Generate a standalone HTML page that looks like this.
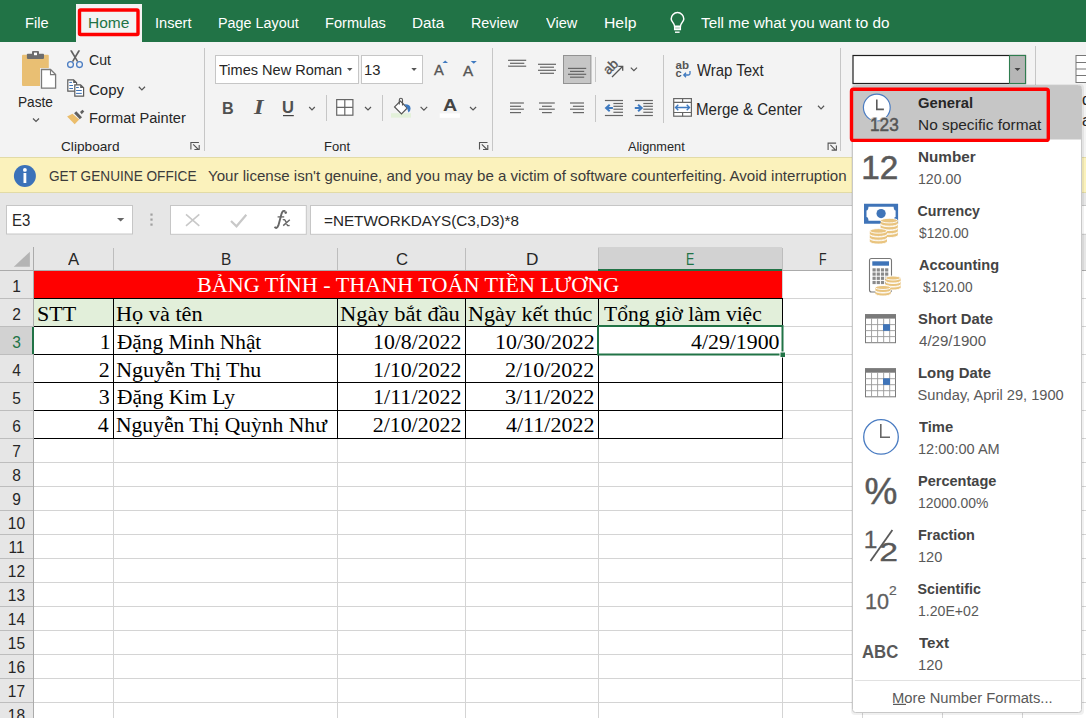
<!DOCTYPE html>
<html><head><meta charset="utf-8"><title>Excel</title>
<style>
html,body{margin:0;padding:0;}
body{width:1086px;height:718px;overflow:hidden;position:relative;background:#fff;font-family:'Liberation Sans',sans-serif;}
.t{position:absolute;white-space:pre;transform-origin:0 0;}
svg.l{position:absolute;left:0;top:0;}
</style></head><body>
<svg class="l" width="1086" height="718" style="z-index:1"><rect x="0" y="0" width="1086" height="42" fill="#217346" /><rect x="0" y="42" width="1086" height="115" fill="#f3f3f3" /><rect x="76" y="4" width="66" height="38" fill="#f3f3f3" /><rect x="0" y="157" width="1086" height="36" fill="#fbf2bc" /><line x1="0" y1="157.5" x2="1086" y2="157.5" stroke="#e2dba6" stroke-width="1" /><line x1="0" y1="192.5" x2="1086" y2="192.5" stroke="#e2dba6" stroke-width="1" /><rect x="0" y="193" width="1086" height="54" fill="#e6e6e6" /><line x1="204.5" y1="48" x2="204.5" y2="151" stroke="#c6c6c6" stroke-width="1" /><line x1="492.5" y1="48" x2="492.5" y2="151" stroke="#c6c6c6" stroke-width="1" /><line x1="840.5" y1="48" x2="840.5" y2="151" stroke="#c6c6c6" stroke-width="1" /><line x1="1035.5" y1="46" x2="1035.5" y2="151" stroke="#c6c6c6" stroke-width="1" /><line x1="326.5" y1="95" x2="326.5" y2="121" stroke="#c6c6c6" stroke-width="1" /><line x1="382.5" y1="95" x2="382.5" y2="121" stroke="#c6c6c6" stroke-width="1" /><line x1="595.5" y1="57" x2="595.5" y2="82" stroke="#c6c6c6" stroke-width="1" /><line x1="595.5" y1="95" x2="595.5" y2="122" stroke="#c6c6c6" stroke-width="1" /><line x1="663.5" y1="55" x2="663.5" y2="123" stroke="#c6c6c6" stroke-width="1" /><rect x="79.5" y="10" width="58.5" height="24.5" rx="1" fill="none" stroke="#ff0000" stroke-width="3.4"/><rect x="22" y="54.7" width="26.8" height="31.3" rx="1" fill="#e9bf73"/><rect x="40" y="68" width="17.2" height="21.6" fill="#f3f3f3"/><path d="M41.5 69.5 H50.5 L55.6 74.6 V88.1 H41.5 Z" fill="#fff" stroke="#7a7a7a" stroke-width="1.3"/><path d="M50.5 69.5 V74.6 H55.6" fill="none" stroke="#7a7a7a" stroke-width="1.1"/><rect x="26.9" y="53.8" width="17.1" height="5.1" rx="0.8" fill="#6d6d6d"/><rect x="32" y="51" width="7" height="4" rx="1" fill="#6d6d6d"/><rect x="34" y="52.6" width="3" height="2.6" fill="#ffffff"/><polyline points="33,118.5 36.0,121.5 39,118.5" fill="none" stroke="#555" stroke-width="1.2"/><polyline points="138.8,86.75 141.9,89.85 145,86.75" fill="none" stroke="#555" stroke-width="1.2"/><polyline points="309.2,107.0 312.0,109.80000000000001 314.8,107.0" fill="none" stroke="#555" stroke-width="1.2"/><polyline points="365,107.0 368.0,110.0 371,107.0" fill="none" stroke="#555" stroke-width="1.2"/><polyline points="420.6,106.85000000000001 423.9,110.14999999999999 427.2,106.85000000000001" fill="none" stroke="#555" stroke-width="1.2"/><polyline points="470,106.975 473.05,110.025 476.1,106.975" fill="none" stroke="#555" stroke-width="1.2"/><polyline points="630.8,67.64999999999999 633.9,70.75000000000001 637,67.64999999999999" fill="none" stroke="#555" stroke-width="1.2"/><polyline points="818,105.77499999999999 821.05,108.825 824.1,105.77499999999999" fill="none" stroke="#555" stroke-width="1.2"/><path d="M70 50.5 L71.9 50.3 L78.3 61.3 L77 61.9 Z" fill="#606060"/><path d="M80.2 50.5 L78.3 50.3 L71.9 61.3 L73.2 61.9 Z" fill="#606060"/><circle cx="70.5" cy="64.6" r="2.9" fill="none" stroke="#4a7cc2" stroke-width="1.3"/><circle cx="79.5" cy="64.6" r="2.9" fill="none" stroke="#4a7cc2" stroke-width="1.3"/><path d="M67.8 79.8 H73.6 L76.6 82.8 V91.1 H67.8 Z" fill="#fff" stroke="#5a5a5a" stroke-width="1.2"/><path d="M73.2 79.8 V83 H76.6 Z" fill="#5a5a5a"/><path d="M69.3 82.4 H72 M69.3 85.5 H73 M69.3 88.5 H73" stroke="#3f74b8" stroke-width="1"/><path d="M74.8 84.8 H80.6 L83.6 87.8 V96.1 H74.8 Z" fill="#fff" stroke="#5a5a5a" stroke-width="1.2"/><path d="M80.2 84.8 V88 H83.6 Z" fill="#5a5a5a"/><path d="M76.1 87.5 H78.8 M76.1 90.5 H81.8 M76.1 93.4 H81.8" stroke="#3f74b8" stroke-width="1"/><path d="M80 112.1 L82.4 109.7 L84.3 111.6 L81.7 114.2 Z" fill="#606060"/><path d="M74.1 113.2 L76.3 111.3 L82 117.2 L79.8 119.2 Z" fill="#606060"/><path d="M67.1 116.4 L72.5 113.8 L79.2 119.6 L74.7 124.3 Z" fill="#ebbd6b"/><path d="M190.9 149.5 V142.5 H198.9" fill="none" stroke="#555" stroke-width="1.1"/><path d="M193.20000000000002 144.3 L198.4 149.5 M194.4 149.5 H199.20000000000002 V145" fill="none" stroke="#555" stroke-width="1.1"/><path d="M479.5 149.5 V142.5 H487.5" fill="none" stroke="#555" stroke-width="1.1"/><path d="M481.8 144.3 L487 149.5 M483 149.5 H487.8 V145" fill="none" stroke="#555" stroke-width="1.1"/><path d="M828.1 150.1 V143.1 H836.1" fill="none" stroke="#555" stroke-width="1.1"/><path d="M830.4 144.9 L835.6 150.1 M831.6 150.1 H836.4 V145.6" fill="none" stroke="#555" stroke-width="1.1"/><rect x="215.5" y="55.5" width="143" height="28" fill="#fff" stroke="#c6c6c6"/><rect x="361.5" y="55.5" width="61" height="28" fill="#fff" stroke="#c6c6c6"/><path d="M347 68 H352.5 L349.75 71 Z" fill="#555"/><path d="M411.3 68 H416.8 L414.05 71 Z" fill="#555"/><path d="M442.5 63 L445.2 60.5 L448 63 Z" fill="#3f7ac0"/><path d="M470.7 61 L476.8 61 L473.75 63.8 Z" fill="#3f7ac0"/><rect x="283" y="115" width="10.8" height="1.2" fill="#444" /><rect x="336.7" y="99.6" width="16.2" height="15.6" fill="#fff" stroke="#666" stroke-width="1.2"/><path d="M344.8 99.6 V115.2 M336.7 107.4 H352.9" stroke="#666" stroke-width="1.2"/><rect x="391" y="113.2" width="20" height="4.4" fill="#e3f1da" /><g transform="translate(0.8,1.4)"><path d="M393.8 105.5 L399.6 99.7 L406.5 106.6 L400.7 112.4 Z" fill="#fff" stroke="#555" stroke-width="1.2"/><path d="M398.5 103 V98.5 A1.6 1.6 0 0 1 401.7 98.5 V104" fill="none" stroke="#555" stroke-width="1.1"/><path d="M403.5 102.8 Q409.5 102.5 409.8 107 Q409.6 110.5 407.6 111.2 L406.3 106.6 Z" fill="#3f7ac0"/></g><rect x="439.7" y="113.4" width="20.2" height="4.4" fill="#ffffff" /><path d="M508.1 60.3 H526.2" stroke="#666" stroke-width="1.2"/><path d="M510 63.3 H524.3" stroke="#666" stroke-width="1.2"/><path d="M508.1 66.2 H526.2" stroke="#666" stroke-width="1.2"/><path d="M538 64.3 H556" stroke="#666" stroke-width="1.2"/><path d="M540 67.2 H554" stroke="#666" stroke-width="1.2"/><path d="M538 70.3 H556" stroke="#666" stroke-width="1.2"/><path d="M540 73.3 H554" stroke="#666" stroke-width="1.2"/><rect x="563.5" y="55.5" width="27.4" height="28" fill="#c6c6c6" stroke="#929292"/><path d="M568 68.4 H586.2" stroke="#666" stroke-width="1.2"/><path d="M570 71.4 H584.2" stroke="#666" stroke-width="1.2"/><path d="M568 74.3 H586.2" stroke="#666" stroke-width="1.2"/><path d="M570 77.2 H584.2" stroke="#666" stroke-width="1.2"/><path d="M510 103 H523.9" stroke="#666" stroke-width="1.2"/><path d="M510 106.3 H521" stroke="#666" stroke-width="1.2"/><path d="M510 109.2 H523.9" stroke="#666" stroke-width="1.2"/><path d="M510 112.6 H521" stroke="#666" stroke-width="1.2"/><path d="M539 103 H554.8" stroke="#666" stroke-width="1.2"/><path d="M542 106.3 H551.8" stroke="#666" stroke-width="1.2"/><path d="M539 109.2 H554.8" stroke="#666" stroke-width="1.2"/><path d="M542 112.6 H551.8" stroke="#666" stroke-width="1.2"/><path d="M570 103 H584" stroke="#666" stroke-width="1.2"/><path d="M572.9 106.3 H584" stroke="#666" stroke-width="1.2"/><path d="M570 109.2 H584" stroke="#666" stroke-width="1.2"/><path d="M572.9 112.6 H584" stroke="#666" stroke-width="1.2"/><text x="0" y="0" transform="translate(608.4,75.2) rotate(-45)" font-family="Liberation Sans" font-size="13.5" fill="#555" stroke="#555" stroke-width="0.35">ab</text><path d="M612 77 L622.5 66.5 M618.3 66.3 H622.7 V70.7" fill="none" stroke="#555" stroke-width="1.3"/><path d="M604.9 100.5 H623.0" stroke="#666" stroke-width="1.2"/><path d="M604.9 115.5 H623.0" stroke="#666" stroke-width="1.2"/><path d="M613.4 103.5 H623.0" stroke="#666" stroke-width="1.2"/><path d="M613.4 106.3 H623.0" stroke="#666" stroke-width="1.2"/><path d="M613.4 109.2 H623.0" stroke="#666" stroke-width="1.2"/><path d="M613.4 112.3 H623.0" stroke="#666" stroke-width="1.2"/><path d="M612.9 108 H606.6999999999999 M609.6999999999999 104.8 L606.1 108 L609.6999999999999 111.3" fill="none" stroke="#3f7ac0" stroke-width="2"/><path d="M634.8 100.5 H652.9" stroke="#666" stroke-width="1.2"/><path d="M634.8 115.5 H652.9" stroke="#666" stroke-width="1.2"/><path d="M643.3 103.5 H652.9" stroke="#666" stroke-width="1.2"/><path d="M643.3 106.3 H652.9" stroke="#666" stroke-width="1.2"/><path d="M643.3 109.2 H652.9" stroke="#666" stroke-width="1.2"/><path d="M643.3 112.3 H652.9" stroke="#666" stroke-width="1.2"/><path d="M634.8 108 H641.0999999999999 M638.0999999999999 104.8 L641.6999999999999 108 L638.0999999999999 111.3" fill="none" stroke="#3f7ac0" stroke-width="2"/><text x="675.5" y="68.5" font-family="Liberation Sans" font-size="11" font-weight="700" fill="#555" textLength="13.5" lengthAdjust="spacingAndGlyphs">ab</text><text x="675.5" y="76.8" font-family="Liberation Sans" font-size="11" font-weight="700" fill="#555">c</text><path d="M690 71 V73.5 Q690 75 688.5 75 H684 M686 72.8 L683.8 75 L686 77.2" fill="none" stroke="#3f7ac0" stroke-width="1.3"/><rect x="673.7" y="98.6" width="17.7" height="17.6" fill="#fff" stroke="#666" stroke-width="1.2"/><path d="M673.7 102.3 H691.4 M673.7 112.5 H691.4 M682.6 98.6 V102.3 M682.6 112.5 V116.2" stroke="#666" stroke-width="1.2"/><path d="M675.5 107.5 H689.5 M678.3 104.8 L675.5 107.5 L678.3 110.2 M686.7 104.8 L689.5 107.5 L686.7 110.2" fill="none" stroke="#3f7ac0" stroke-width="1.4"/><rect x="1076" y="55.5" width="14" height="27" fill="#fff" stroke="#777"/><path d="M1076 62.5 H1090 M1076 69 H1090 M1076 75.5 H1090" stroke="#777"/><path d="M674.6 26.3 C674.6 23.2 671.2 21.6 671.2 18.9 A6.3 6.3 0 1 1 683.8 18.9 C683.8 21.6 680.4 23.2 680.4 26.3 Z" fill="none" stroke="#fff" stroke-width="1.5"/><path d="M674.6 26.3 V29.6 H680.4 V26.3 M675 28 H680" fill="none" stroke="#fff" stroke-width="1.3"/><rect x="675" y="31.5" width="4.6" height="1.4" fill="#ffffff" /><circle cx="24.9" cy="176" r="11" fill="#3b72b9"/><rect x="23.5" y="173" width="2.8" height="10" fill="#fff"/><circle cx="24.9" cy="169.9" r="1.9" fill="#fff"/><rect x="6.5" y="205.5" width="126" height="28.5" fill="#fff" stroke="#c6c6c6"/><path d="M117 218 H124.3 L120.65 221.6 Z" fill="#666"/><rect x="150.4" y="213.5" width="2.2" height="2.2" fill="#a0a0a0" /><rect x="150.4" y="218.5" width="2.2" height="2.2" fill="#a0a0a0" /><rect x="150.4" y="223.5" width="2.2" height="2.2" fill="#a0a0a0" /><rect x="170.5" y="205.5" width="135.8" height="28.8" fill="#fff" stroke="#c6c6c6"/><path d="M186 214.3 L199.3 225.8 M199.3 214.3 L186 225.8" stroke="#c8c8c8" stroke-width="1.6"/><path d="M231 221 L236.5 226.3 L246.3 214.8" fill="none" stroke="#c8c8c8" stroke-width="2.2"/><path d="M274.6 226.8 Q276.6 229.6 278.4 225.4 L281.6 213.6 Q282.8 209.9 285.2 211.2" fill="none" stroke="#666" stroke-width="1.9"/><circle cx="285.7" cy="212.6" r="1.3" fill="#666"/><path d="M277.6 216.9 H284.2" stroke="#666" stroke-width="1.3"/><path d="M282.8 219.9 Q284.6 218.9 285.6 221.2 L287.2 224.8 Q287.9 226.1 289.6 225.4 M289.8 219.8 L283.2 225.6" fill="none" stroke="#666" stroke-width="1.4"/><rect x="310.5" y="205.5" width="800" height="28.8" fill="#fff" stroke="#c6c6c6"/><rect x="0" y="247" width="1086" height="471" fill="#ffffff" /><rect x="0" y="247" width="1086" height="23" fill="#e6e6e6" /><rect x="0" y="270" width="33" height="448" fill="#e6e6e6" /><rect x="598" y="247" width="184" height="23" fill="#d2d2d2" /><rect x="0" y="327" width="33" height="27" fill="#d2d2d2" /><line x1="113.5" y1="271" x2="113.5" y2="718" stroke="#d4d4d4" stroke-width="1" /><line x1="337.5" y1="271" x2="337.5" y2="718" stroke="#d4d4d4" stroke-width="1" /><line x1="465.5" y1="271" x2="465.5" y2="718" stroke="#d4d4d4" stroke-width="1" /><line x1="598.5" y1="271" x2="598.5" y2="718" stroke="#d4d4d4" stroke-width="1" /><line x1="782.5" y1="271" x2="782.5" y2="718" stroke="#d4d4d4" stroke-width="1" /><line x1="862.5" y1="271" x2="862.5" y2="718" stroke="#d4d4d4" stroke-width="1" /><line x1="942.5" y1="271" x2="942.5" y2="718" stroke="#d4d4d4" stroke-width="1" /><line x1="1022.5" y1="271" x2="1022.5" y2="718" stroke="#d4d4d4" stroke-width="1" /><line x1="34" y1="298.5" x2="1086" y2="298.5" stroke="#d4d4d4" stroke-width="1" /><line x1="34" y1="326.5" x2="1086" y2="326.5" stroke="#d4d4d4" stroke-width="1" /><line x1="34" y1="354.5" x2="1086" y2="354.5" stroke="#d4d4d4" stroke-width="1" /><line x1="34" y1="382.5" x2="1086" y2="382.5" stroke="#d4d4d4" stroke-width="1" /><line x1="34" y1="410.5" x2="1086" y2="410.5" stroke="#d4d4d4" stroke-width="1" /><line x1="34" y1="438.5" x2="1086" y2="438.5" stroke="#d4d4d4" stroke-width="1" /><line x1="34" y1="462.5" x2="1086" y2="462.5" stroke="#d4d4d4" stroke-width="1" /><line x1="34" y1="486.5" x2="1086" y2="486.5" stroke="#d4d4d4" stroke-width="1" /><line x1="34" y1="510.5" x2="1086" y2="510.5" stroke="#d4d4d4" stroke-width="1" /><line x1="34" y1="534.5" x2="1086" y2="534.5" stroke="#d4d4d4" stroke-width="1" /><line x1="34" y1="558.5" x2="1086" y2="558.5" stroke="#d4d4d4" stroke-width="1" /><line x1="34" y1="582.5" x2="1086" y2="582.5" stroke="#d4d4d4" stroke-width="1" /><line x1="34" y1="606.5" x2="1086" y2="606.5" stroke="#d4d4d4" stroke-width="1" /><line x1="34" y1="630.5" x2="1086" y2="630.5" stroke="#d4d4d4" stroke-width="1" /><line x1="34" y1="654.5" x2="1086" y2="654.5" stroke="#d4d4d4" stroke-width="1" /><line x1="34" y1="678.5" x2="1086" y2="678.5" stroke="#d4d4d4" stroke-width="1" /><line x1="34" y1="702.5" x2="1086" y2="702.5" stroke="#d4d4d4" stroke-width="1" /><line x1="113.5" y1="248" x2="113.5" y2="270" stroke="#bdbdbd" stroke-width="1" /><line x1="337.5" y1="248" x2="337.5" y2="270" stroke="#bdbdbd" stroke-width="1" /><line x1="465.5" y1="248" x2="465.5" y2="270" stroke="#bdbdbd" stroke-width="1" /><line x1="598.5" y1="248" x2="598.5" y2="270" stroke="#bdbdbd" stroke-width="1" /><line x1="782.5" y1="248" x2="782.5" y2="270" stroke="#bdbdbd" stroke-width="1" /><line x1="862.5" y1="248" x2="862.5" y2="270" stroke="#bdbdbd" stroke-width="1" /><line x1="942.5" y1="248" x2="942.5" y2="270" stroke="#bdbdbd" stroke-width="1" /><line x1="1022.5" y1="248" x2="1022.5" y2="270" stroke="#bdbdbd" stroke-width="1" /><line x1="0" y1="298.5" x2="33" y2="298.5" stroke="#bdbdbd" stroke-width="1" /><line x1="0" y1="326.5" x2="33" y2="326.5" stroke="#bdbdbd" stroke-width="1" /><line x1="0" y1="354.5" x2="33" y2="354.5" stroke="#bdbdbd" stroke-width="1" /><line x1="0" y1="382.5" x2="33" y2="382.5" stroke="#bdbdbd" stroke-width="1" /><line x1="0" y1="410.5" x2="33" y2="410.5" stroke="#bdbdbd" stroke-width="1" /><line x1="0" y1="438.5" x2="33" y2="438.5" stroke="#bdbdbd" stroke-width="1" /><line x1="0" y1="462.5" x2="33" y2="462.5" stroke="#bdbdbd" stroke-width="1" /><line x1="0" y1="486.5" x2="33" y2="486.5" stroke="#bdbdbd" stroke-width="1" /><line x1="0" y1="510.5" x2="33" y2="510.5" stroke="#bdbdbd" stroke-width="1" /><line x1="0" y1="534.5" x2="33" y2="534.5" stroke="#bdbdbd" stroke-width="1" /><line x1="0" y1="558.5" x2="33" y2="558.5" stroke="#bdbdbd" stroke-width="1" /><line x1="0" y1="582.5" x2="33" y2="582.5" stroke="#bdbdbd" stroke-width="1" /><line x1="0" y1="606.5" x2="33" y2="606.5" stroke="#bdbdbd" stroke-width="1" /><line x1="0" y1="630.5" x2="33" y2="630.5" stroke="#bdbdbd" stroke-width="1" /><line x1="0" y1="654.5" x2="33" y2="654.5" stroke="#bdbdbd" stroke-width="1" /><line x1="0" y1="678.5" x2="33" y2="678.5" stroke="#bdbdbd" stroke-width="1" /><line x1="0" y1="702.5" x2="33" y2="702.5" stroke="#bdbdbd" stroke-width="1" /><line x1="0" y1="270.5" x2="1086" y2="270.5" stroke="#ababab" stroke-width="1" /><line x1="33.5" y1="247" x2="33.5" y2="718" stroke="#ababab" stroke-width="1" /><path d="M29.9 251.7 V266.7 H13.8 Z" fill="#b4b4b4"/><rect x="598" y="269" width="184" height="2" fill="#217346" /><rect x="32" y="327" width="2" height="27" fill="#217346" /><rect x="34" y="271" width="748" height="27" fill="#ff0000" /><rect x="34" y="299" width="748" height="27" fill="#e2efda" /><line x1="34" y1="298.5" x2="782.5" y2="298.5" stroke="#000" stroke-width="1" /><line x1="34" y1="326.5" x2="782.5" y2="326.5" stroke="#000" stroke-width="1" /><line x1="34" y1="354.5" x2="782.5" y2="354.5" stroke="#000" stroke-width="1" /><line x1="34" y1="382.5" x2="782.5" y2="382.5" stroke="#000" stroke-width="1" /><line x1="34" y1="410.5" x2="782.5" y2="410.5" stroke="#000" stroke-width="1" /><line x1="34" y1="438.5" x2="782.5" y2="438.5" stroke="#000" stroke-width="1" /><line x1="113.5" y1="298" x2="113.5" y2="438.5" stroke="#000" stroke-width="1" /><line x1="337.5" y1="298" x2="337.5" y2="438.5" stroke="#000" stroke-width="1" /><line x1="465.5" y1="298" x2="465.5" y2="438.5" stroke="#000" stroke-width="1" /><line x1="598.5" y1="298" x2="598.5" y2="438.5" stroke="#000" stroke-width="1" /><line x1="782.5" y1="298" x2="782.5" y2="438.5" stroke="#000" stroke-width="1" /><rect x="598" y="326" width="184.5" height="28.5" fill="none" stroke="#217346" stroke-width="2"/><rect x="779.5" y="351.5" width="6" height="6" fill="#ffffff" /><rect x="780.5" y="352.5" width="4.5" height="4.5" fill="#217346" /></svg>
<div class="t" style="left:0;width:33px;text-align:center;top:278px;font-size:16.5px;line-height:16.5px;color:#262626;z-index:5;transform-origin:16.5px 0;transform:scaleX(0.94)">1</div><div class="t" style="left:0;width:33px;text-align:center;top:306px;font-size:16.5px;line-height:16.5px;color:#262626;z-index:5;transform-origin:16.5px 0;transform:scaleX(0.94)">2</div><div class="t" style="left:0;width:33px;text-align:center;top:334px;font-size:16.5px;line-height:16.5px;color:#217346;z-index:5;transform-origin:16.5px 0;transform:scaleX(0.94)">3</div><div class="t" style="left:0;width:33px;text-align:center;top:362px;font-size:16.5px;line-height:16.5px;color:#262626;z-index:5;transform-origin:16.5px 0;transform:scaleX(0.94)">4</div><div class="t" style="left:0;width:33px;text-align:center;top:390px;font-size:16.5px;line-height:16.5px;color:#262626;z-index:5;transform-origin:16.5px 0;transform:scaleX(0.94)">5</div><div class="t" style="left:0;width:33px;text-align:center;top:418px;font-size:16.5px;line-height:16.5px;color:#262626;z-index:5;transform-origin:16.5px 0;transform:scaleX(0.94)">6</div><div class="t" style="left:0;width:33px;text-align:center;top:443px;font-size:16.5px;line-height:16.5px;color:#262626;z-index:5;transform-origin:16.5px 0;transform:scaleX(0.94)">7</div><div class="t" style="left:0;width:33px;text-align:center;top:467px;font-size:16.5px;line-height:16.5px;color:#262626;z-index:5;transform-origin:16.5px 0;transform:scaleX(0.94)">8</div><div class="t" style="left:0;width:33px;text-align:center;top:491px;font-size:16.5px;line-height:16.5px;color:#262626;z-index:5;transform-origin:16.5px 0;transform:scaleX(0.94)">9</div><div class="t" style="left:0;width:33px;text-align:center;top:515px;font-size:16.5px;line-height:16.5px;color:#262626;z-index:5;transform-origin:16.5px 0;transform:scaleX(0.94)">10</div><div class="t" style="left:0;width:33px;text-align:center;top:539px;font-size:16.5px;line-height:16.5px;color:#262626;z-index:5;transform-origin:16.5px 0;transform:scaleX(0.94)">11</div><div class="t" style="left:0;width:33px;text-align:center;top:563px;font-size:16.5px;line-height:16.5px;color:#262626;z-index:5;transform-origin:16.5px 0;transform:scaleX(0.94)">12</div><div class="t" style="left:0;width:33px;text-align:center;top:587px;font-size:16.5px;line-height:16.5px;color:#262626;z-index:5;transform-origin:16.5px 0;transform:scaleX(0.94)">13</div><div class="t" style="left:0;width:33px;text-align:center;top:611px;font-size:16.5px;line-height:16.5px;color:#262626;z-index:5;transform-origin:16.5px 0;transform:scaleX(0.94)">14</div><div class="t" style="left:0;width:33px;text-align:center;top:635px;font-size:16.5px;line-height:16.5px;color:#262626;z-index:5;transform-origin:16.5px 0;transform:scaleX(0.94)">15</div><div class="t" style="left:0;width:33px;text-align:center;top:659px;font-size:16.5px;line-height:16.5px;color:#262626;z-index:5;transform-origin:16.5px 0;transform:scaleX(0.94)">16</div><div class="t" style="left:0;width:33px;text-align:center;top:683px;font-size:16.5px;line-height:16.5px;color:#262626;z-index:5;transform-origin:16.5px 0;transform:scaleX(0.94)">17</div><div class="t" style="left:0;width:33px;text-align:center;top:707px;font-size:16.5px;line-height:16.5px;color:#262626;z-index:5;transform-origin:16.5px 0;transform:scaleX(0.94)">18</div><div class="t" style="left:1082px;top:92px;font-size:16px;line-height:16px;color:#262626;z-index:5">d</div><div class="t" style="left:1082px;top:113px;font-size:16px;line-height:16px;color:#262626;z-index:5">a</div><div class="t" style="left:864.5px;top:472.5px;font-size:37px;line-height:37px;color:#595959;-webkit-text-stroke:0.45px #595959;z-index:20">%</div>
<svg class="l" width="1086" height="718" style="z-index:10"><rect x="853" y="55.5" width="172.5" height="28" fill="#fff" stroke="#1f1f1f" stroke-width="1.2"/><rect x="1009.5" y="55.5" width="16" height="28" fill="#b6b6b6" stroke="#2f7d4f" stroke-width="1.1"/><path d="M1014.5 68 H1020.5 L1017.5 71 Z" fill="#444"/><rect x="851" y="84" width="233" height="631" rx="4" fill="#000" opacity="0.06"/><rect x="852.5" y="85.5" width="229" height="627" rx="3" fill="#fff" stroke="#c8c8c8"/><rect x="853" y="86" width="228" height="53.5" fill="#c6c6c6" /><line x1="855" y1="680.5" x2="1080" y2="680.5" stroke="#e1e1e1" stroke-width="1" /><rect x="893" y="703.8" width="13" height="1.2" fill="#595959" /><rect x="851.5" y="89.2" width="196.8" height="51.2" rx="2" fill="none" stroke="#ff0000" stroke-width="3.4"/><circle cx="876.8" cy="107.6" r="13.4" fill="#fff" stroke="#4a7cc2" stroke-width="1.2"/><path d="M876.8 99.5 V109.4 H883.9" fill="none" stroke="#5a5a5a" stroke-width="1.6"/><path d="M864 203.8 H898.1 V223.7 H864 Z" fill="#3f74b8"/><path d="M868.5 206.8 H893.6 Q893.8 210.5 895.6 210.5 V217 Q893.8 217 893.6 220.7 H868.5 Q868.3 217 866.5 217 V210.5 Q868.3 210.5 868.5 206.8 Z" fill="#fff"/><circle cx="881.1" cy="213.6" r="4.6" fill="#3f74b8"/><ellipse cx="889.2" cy="235.30000000000004" rx="8.6" ry="2.3" fill="#e9c47f" stroke="#fff" stroke-width="0.9"/><rect x="880.6" y="232.00000000000003" width="17.2" height="3.3" fill="#e9c47f"/><ellipse cx="889.2" cy="232.00000000000003" rx="8.6" ry="2.3" fill="#e9c47f" stroke="#fff" stroke-width="0.9"/><ellipse cx="889.2" cy="231.50000000000003" rx="8.6" ry="2.3" fill="#e9c47f" stroke="#fff" stroke-width="0.9"/><rect x="880.6" y="228.20000000000002" width="17.2" height="3.3" fill="#e9c47f"/><ellipse cx="889.2" cy="228.20000000000002" rx="8.6" ry="2.3" fill="#e9c47f" stroke="#fff" stroke-width="0.9"/><ellipse cx="889.2" cy="227.70000000000005" rx="8.6" ry="2.3" fill="#e9c47f" stroke="#fff" stroke-width="0.9"/><rect x="880.6" y="224.40000000000003" width="17.2" height="3.3" fill="#e9c47f"/><ellipse cx="889.2" cy="224.40000000000003" rx="8.6" ry="2.3" fill="#e9c47f" stroke="#fff" stroke-width="0.9"/><ellipse cx="889.2" cy="223.90000000000003" rx="8.6" ry="2.3" fill="#e9c47f" stroke="#fff" stroke-width="0.9"/><rect x="880.6" y="220.60000000000002" width="17.2" height="3.3" fill="#e9c47f"/><ellipse cx="889.2" cy="220.60000000000002" rx="8.6" ry="2.3" fill="#e9c47f" stroke="#fff" stroke-width="0.9"/><ellipse cx="878.4" cy="241.8" rx="8.6" ry="2.3" fill="#e9c47f" stroke="#fff" stroke-width="0.9"/><rect x="869.8" y="238.5" width="17.2" height="3.3" fill="#e9c47f"/><ellipse cx="878.4" cy="238.5" rx="8.6" ry="2.3" fill="#e9c47f" stroke="#fff" stroke-width="0.9"/><ellipse cx="878.4" cy="238.00000000000003" rx="8.6" ry="2.3" fill="#e9c47f" stroke="#fff" stroke-width="0.9"/><rect x="869.8" y="234.70000000000002" width="17.2" height="3.3" fill="#e9c47f"/><ellipse cx="878.4" cy="234.70000000000002" rx="8.6" ry="2.3" fill="#e9c47f" stroke="#fff" stroke-width="0.9"/><ellipse cx="878.4" cy="234.20000000000002" rx="8.6" ry="2.3" fill="#e9c47f" stroke="#fff" stroke-width="0.9"/><rect x="869.8" y="230.9" width="17.2" height="3.3" fill="#e9c47f"/><ellipse cx="878.4" cy="230.9" rx="8.6" ry="2.3" fill="#e9c47f" stroke="#fff" stroke-width="0.9"/><rect x="869.5" y="258.5" width="22" height="33.5" rx="2" fill="#fff" stroke="#777" stroke-width="1.1"/><rect x="872.3" y="261.3" width="16.7" height="4.4" fill="#3f74b8" /><rect x="872.5" y="268.3" width="3.2" height="3.2" fill="#8a8a8a" /><rect x="876.7" y="268.3" width="3.2" height="3.2" fill="#8a8a8a" /><rect x="880.9" y="268.3" width="3.2" height="3.2" fill="#8a8a8a" /><rect x="885.1" y="268.3" width="3.2" height="3.2" fill="#8a8a8a" /><rect x="872.5" y="272.5" width="3.2" height="3.2" fill="#8a8a8a" /><rect x="876.7" y="272.5" width="3.2" height="3.2" fill="#8a8a8a" /><rect x="880.9" y="272.5" width="3.2" height="3.2" fill="#8a8a8a" /><rect x="885.1" y="272.5" width="3.2" height="3.2" fill="#8a8a8a" /><rect x="872.5" y="276.7" width="3.2" height="3.2" fill="#8a8a8a" /><rect x="876.7" y="276.7" width="3.2" height="3.2" fill="#8a8a8a" /><rect x="880.9" y="276.7" width="3.2" height="3.2" fill="#8a8a8a" /><rect x="885.1" y="276.7" width="3.2" height="3.2" fill="#8a8a8a" /><rect x="872.5" y="280.90000000000003" width="3.2" height="3.2" fill="#8a8a8a" /><rect x="876.7" y="280.90000000000003" width="3.2" height="3.2" fill="#8a8a8a" /><rect x="880.9" y="280.90000000000003" width="3.2" height="3.2" fill="#8a8a8a" /><rect x="885.1" y="280.90000000000003" width="3.2" height="3.2" fill="#8a8a8a" /><ellipse cx="893" cy="288.0" rx="7.6" ry="2" fill="#e9c47f" stroke="#fff" stroke-width="0.9"/><rect x="885.4" y="285.0" width="15.2" height="3.0" fill="#e9c47f"/><ellipse cx="893" cy="285.0" rx="7.6" ry="2" fill="#e9c47f" stroke="#fff" stroke-width="0.9"/><ellipse cx="893" cy="284.5" rx="7.6" ry="2" fill="#e9c47f" stroke="#fff" stroke-width="0.9"/><rect x="885.4" y="281.5" width="15.2" height="3.0" fill="#e9c47f"/><ellipse cx="893" cy="281.5" rx="7.6" ry="2" fill="#e9c47f" stroke="#fff" stroke-width="0.9"/><ellipse cx="893" cy="281.0" rx="7.6" ry="2" fill="#e9c47f" stroke="#fff" stroke-width="0.9"/><rect x="885.4" y="278.0" width="15.2" height="3.0" fill="#e9c47f"/><ellipse cx="893" cy="278.0" rx="7.6" ry="2" fill="#e9c47f" stroke="#fff" stroke-width="0.9"/><ellipse cx="883" cy="294.0" rx="7.6" ry="2" fill="#e9c47f" stroke="#fff" stroke-width="0.9"/><rect x="875.4" y="291.0" width="15.2" height="3.0" fill="#e9c47f"/><ellipse cx="883" cy="291.0" rx="7.6" ry="2" fill="#e9c47f" stroke="#fff" stroke-width="0.9"/><ellipse cx="883" cy="290.5" rx="7.6" ry="2" fill="#e9c47f" stroke="#fff" stroke-width="0.9"/><rect x="875.4" y="287.5" width="15.2" height="3.0" fill="#e9c47f"/><ellipse cx="883" cy="287.5" rx="7.6" ry="2" fill="#e9c47f" stroke="#fff" stroke-width="0.9"/><rect x="865.5" y="314.7" width="30" height="28" fill="#fff" stroke="#7a7a7a" stroke-width="1"/><rect x="865" y="314.2" width="31" height="4.4" fill="#7a7a7a" /><line x1="871.55" y1="318.2" x2="871.55" y2="342.7" stroke="#9a9a9a" stroke-width="0.9" /><line x1="877.6" y1="318.2" x2="877.6" y2="342.7" stroke="#9a9a9a" stroke-width="0.9" /><line x1="883.65" y1="318.2" x2="883.65" y2="342.7" stroke="#9a9a9a" stroke-width="0.9" /><line x1="889.7" y1="318.2" x2="889.7" y2="342.7" stroke="#9a9a9a" stroke-width="0.9" /><line x1="865.5" y1="324.59999999999997" x2="895.5" y2="324.59999999999997" stroke="#9a9a9a" stroke-width="0.9" /><line x1="865.5" y1="330.59999999999997" x2="895.5" y2="330.59999999999997" stroke="#9a9a9a" stroke-width="0.9" /><line x1="865.5" y1="336.59999999999997" x2="895.5" y2="336.59999999999997" stroke="#9a9a9a" stroke-width="0.9" /><rect x="883" y="324.2" width="7" height="6.6" fill="#3f74b8" /><rect x="865.5" y="368.8" width="30" height="28" fill="#fff" stroke="#7a7a7a" stroke-width="1"/><rect x="865" y="368.3" width="31" height="4.4" fill="#7a7a7a" /><line x1="871.55" y1="372.3" x2="871.55" y2="396.8" stroke="#9a9a9a" stroke-width="0.9" /><line x1="877.6" y1="372.3" x2="877.6" y2="396.8" stroke="#9a9a9a" stroke-width="0.9" /><line x1="883.65" y1="372.3" x2="883.65" y2="396.8" stroke="#9a9a9a" stroke-width="0.9" /><line x1="889.7" y1="372.3" x2="889.7" y2="396.8" stroke="#9a9a9a" stroke-width="0.9" /><line x1="865.5" y1="378.7" x2="895.5" y2="378.7" stroke="#9a9a9a" stroke-width="0.9" /><line x1="865.5" y1="384.7" x2="895.5" y2="384.7" stroke="#9a9a9a" stroke-width="0.9" /><line x1="865.5" y1="390.7" x2="895.5" y2="390.7" stroke="#9a9a9a" stroke-width="0.9" /><rect x="883" y="378.3" width="7" height="6.6" fill="#3f74b8" /><circle cx="881" cy="436.9" r="17.3" fill="#fff" stroke="#4a7cc2" stroke-width="1.3"/><path d="M880.8 424 V437.2 H890" fill="none" stroke="#666" stroke-width="1.6"/><text x="863.8" y="548" font-family="Liberation Sans" font-size="24.5" fill="#595959" stroke="#595959" stroke-width="0.3">1</text><path d="M870.5 561 L892.4 530" stroke="#595959" stroke-width="1.8"/><text x="0" y="0" transform="translate(879.3,561) scale(1.35,1)" font-family="Liberation Sans" font-size="25" fill="#595959" stroke="#595959" stroke-width="0.3">2</text></svg>
<div class="t" style="left:24.74px;top:15px;font-family:'Liberation Sans', sans-serif;font-weight:400;font-size:15.19px;line-height:15.19px;color:#ffffff;z-index:5;transform:scaleX(0.9609);">File</div><div class="t" style="left:87.78px;top:15px;font-family:'Liberation Sans', sans-serif;font-weight:400;font-size:15.19px;line-height:15.19px;color:#217346;z-index:5;transform:scaleX(1.0205);">Home</div><div class="t" style="left:155.44px;top:15px;font-family:'Liberation Sans', sans-serif;font-weight:400;font-size:15.19px;line-height:15.19px;color:#ffffff;z-index:5;transform:scaleX(0.9622);">Insert</div><div class="t" style="left:218.25px;top:15px;font-family:'Liberation Sans', sans-serif;font-weight:400;font-size:15.19px;line-height:15.19px;color:#ffffff;z-index:5;transform:scaleX(0.9452);">Page Layout</div><div class="t" style="left:325.24px;top:15px;font-family:'Liberation Sans', sans-serif;font-weight:400;font-size:15.19px;line-height:15.19px;color:#ffffff;z-index:5;transform:scaleX(0.9613);">Formulas</div><div class="t" style="left:411.99px;top:15px;font-family:'Liberation Sans', sans-serif;font-weight:400;font-size:15.19px;line-height:15.19px;color:#ffffff;z-index:5;transform:scaleX(1.0065);">Data</div><div class="t" style="left:471.36px;top:15px;font-family:'Liberation Sans', sans-serif;font-weight:400;font-size:15.19px;line-height:15.19px;color:#ffffff;z-index:5;transform:scaleX(0.9449);">Review</div><div class="t" style="left:546.20px;top:15px;font-family:'Liberation Sans', sans-serif;font-weight:400;font-size:15.19px;line-height:15.19px;color:#ffffff;z-index:5;transform:scaleX(0.9576);">View</div><div class="t" style="left:604.36px;top:15px;font-family:'Liberation Sans', sans-serif;font-weight:400;font-size:15.19px;line-height:15.19px;color:#ffffff;z-index:5;transform:scaleX(1.0367);">Help</div><div class="t" style="left:701.40px;top:15px;font-family:'Liberation Sans', sans-serif;font-weight:400;font-size:15.19px;line-height:15.19px;color:#ffffff;z-index:5;transform:scaleX(1.0059);">Tell me what you want to do</div><div class="t" style="left:18.38px;top:95px;font-family:'Liberation Sans', sans-serif;font-weight:400;font-size:14.77px;line-height:14.77px;color:#262626;z-index:5;transform:scaleX(0.9250);">Paste</div><div class="t" style="left:89.28px;top:54px;font-family:'Liberation Sans', sans-serif;font-weight:400;font-size:13.81px;line-height:13.81px;color:#262626;z-index:5;transform:scaleX(1.0238);">Cut</div><div class="t" style="left:89.31px;top:82px;font-family:'Liberation Sans', sans-serif;font-weight:400;font-size:15.19px;line-height:15.19px;color:#262626;z-index:5;transform:scaleX(0.9853);">Copy</div><div class="t" style="left:89.27px;top:111px;font-family:'Liberation Sans', sans-serif;font-weight:400;font-size:14.22px;line-height:14.22px;color:#262626;z-index:5;transform:scaleX(1.0290);">Format Painter</div><div class="t" style="left:61.28px;top:140px;font-family:'Liberation Sans', sans-serif;font-weight:400;font-size:13.39px;line-height:13.39px;color:#262626;z-index:5;transform:scaleX(1.0214);">Clipboard</div><div class="t" style="left:218.80px;top:62px;font-family:'Liberation Sans', sans-serif;font-weight:400;font-size:15.19px;line-height:15.19px;color:#262626;z-index:5;transform:scaleX(0.9578);">Times New Roman</div><div class="t" style="left:364.03px;top:62px;font-family:'Liberation Sans', sans-serif;font-weight:400;font-size:15.19px;line-height:15.19px;color:#262626;z-index:5;transform:scaleX(0.9733);">13</div><div class="t" style="left:324.06px;top:141px;font-family:'Liberation Sans', sans-serif;font-weight:400;font-size:12.57px;line-height:12.57px;color:#262626;z-index:5;transform:scaleX(1.0375);">Font</div><div class="t" style="left:697.20px;top:62px;font-family:'Liberation Sans', sans-serif;font-weight:400;font-size:16.02px;line-height:16.02px;color:#262626;z-index:5;transform:scaleX(0.9324);">Wrap Text</div><div class="t" style="left:696.26px;top:101px;font-family:'Liberation Sans', sans-serif;font-weight:400;font-size:16.02px;line-height:16.02px;color:#262626;z-index:5;transform:scaleX(0.9411);">Merge &amp; Center</div><div class="t" style="left:627.60px;top:141px;font-family:'Liberation Sans', sans-serif;font-weight:400;font-size:12.7px;line-height:12.7px;color:#262626;z-index:5;transform:scaleX(1.0053);">Alignment</div><div class="t" style="left:221.75px;top:100px;font-family:'Liberation Sans', sans-serif;font-weight:700;font-size:17.12px;line-height:17.12px;color:#505050;z-index:5;transform:scaleX(0.9455);">B</div><div class="t" style="left:253.90px;top:96px;font-family:'Liberation Serif', serif;font-weight:700;font-size:21.9px;line-height:21.9px;color:#505050;z-index:5;font-style:italic;transform:scaleX(1.1222);">I</div><div class="t" style="left:281.85px;top:100px;font-family:'Liberation Sans', sans-serif;font-weight:700;font-size:15.74px;line-height:15.74px;color:#505050;z-index:5;transform:scaleX(1.0500);">U</div><div class="t" style="left:434.30px;top:63px;font-family:'Liberation Sans', sans-serif;font-weight:400;font-size:14.36px;line-height:14.36px;color:#555555;z-index:5;-webkit-text-stroke:0.35px #555555;transform:scaleX(1.0200);">A</div><div class="t" style="left:463.00px;top:64px;font-family:'Liberation Sans', sans-serif;font-weight:400;font-size:14.5px;line-height:14.5px;color:#555555;z-index:5;-webkit-text-stroke:0.35px #555555;transform:scaleX(1.0500);">A</div><div class="t" style="left:442.52px;top:97px;font-family:'Liberation Sans', sans-serif;font-weight:700;font-size:17.12px;line-height:17.12px;color:#444444;z-index:5;transform:scaleX(1.1500);">A</div><div class="t" style="left:49.38px;top:169px;font-family:'Liberation Sans', sans-serif;font-weight:400;font-size:14.91px;line-height:14.91px;color:#3b3b3b;z-index:5;transform:scaleX(0.9150);">GET GENUINE OFFICE</div><div class="t" style="left:208.39px;top:169px;font-family:'Liberation Sans', sans-serif;font-weight:400;font-size:14.91px;line-height:14.91px;color:#3b3b3b;z-index:5;transform:scaleX(1.0121);">Your license isn&#x27;t genuine, and you may be a victim of software counterfeiting. Avoid interruption</div><div class="t" style="left:12.46px;top:213px;font-family:'Liberation Sans', sans-serif;font-weight:400;font-size:15.88px;line-height:15.88px;color:#262626;z-index:5;transform:scaleX(0.9444);">E3</div><div class="t" style="left:323.81px;top:213px;font-family:'Liberation Sans', sans-serif;font-weight:400;font-size:15.33px;line-height:15.33px;color:#262626;z-index:5;transform:scaleX(0.9949);">=NETWORKDAYS(C3,D3)*8</div><div class="t" style="left:68.00px;top:252px;font-family:'Liberation Sans', sans-serif;font-weight:400;font-size:16.57px;line-height:16.57px;color:#262626;z-index:5;transform:scaleX(1.0091);">A</div><div class="t" style="left:220.87px;top:252px;font-family:'Liberation Sans', sans-serif;font-weight:400;font-size:16.57px;line-height:16.57px;color:#262626;z-index:5;transform:scaleX(0.9333);">B</div><div class="t" style="left:395.69px;top:252px;font-family:'Liberation Sans', sans-serif;font-weight:400;font-size:16.57px;line-height:16.57px;color:#262626;z-index:5;transform:scaleX(1.0100);">C</div><div class="t" style="left:525.96px;top:252px;font-family:'Liberation Sans', sans-serif;font-weight:400;font-size:16.57px;line-height:16.57px;color:#262626;z-index:5;transform:scaleX(1.0400);">D</div><div class="t" style="left:686.40px;top:252px;font-family:'Liberation Sans', sans-serif;font-weight:400;font-size:16.57px;line-height:16.57px;color:#217346;z-index:5;transform:scaleX(0.7500);">E</div><div class="t" style="left:818.52px;top:252px;font-family:'Liberation Sans', sans-serif;font-weight:400;font-size:16.57px;line-height:16.57px;color:#262626;z-index:5;transform:scaleX(0.7500);">F</div><div class="t" style="left:196.99px;top:274px;font-family:'Liberation Serif', serif;font-weight:400;font-size:21.9px;line-height:21.9px;color:#ffffff;z-index:5;transform:scaleX(1.0111);">BẢNG TÍNH - THANH TOÁN TIỀN LƯƠNG</div><div class="t" style="left:36.99px;top:303px;font-family:'Liberation Serif', serif;font-weight:400;font-size:21.9px;line-height:21.9px;color:#000000;z-index:5;transform:scaleX(1.0053);">STT</div><div class="t" style="left:115.68px;top:303px;font-family:'Liberation Serif', serif;font-weight:400;font-size:21.9px;line-height:21.9px;color:#000000;z-index:5;transform:scaleX(1.0179);">Họ và tên</div><div class="t" style="left:339.77px;top:303px;font-family:'Liberation Serif', serif;font-weight:400;font-size:21.9px;line-height:21.9px;color:#000000;z-index:5;transform:scaleX(1.0270);">Ngày bắt đầu</div><div class="t" style="left:468.19px;top:303px;font-family:'Liberation Serif', serif;font-weight:400;font-size:21.9px;line-height:21.9px;color:#000000;z-index:5;transform:scaleX(1.0124);">Ngày kết thúc</div><div class="t" style="left:604.20px;top:303px;font-family:'Liberation Serif', serif;font-weight:400;font-size:21.9px;line-height:21.9px;color:#000000;z-index:5;transform:scaleX(0.9825);">Tổng giờ làm việc</div><div class="t" style="left:99.80px;top:331px;font-family:'Liberation Serif', serif;font-weight:400;font-size:21.9px;line-height:21.9px;color:#000000;z-index:5;">1</div><div class="t" style="left:117.20px;top:331px;font-family:'Liberation Serif', serif;font-weight:400;font-size:21.9px;line-height:21.9px;color:#000000;z-index:5;transform:scaleX(0.9723);">Đặng Minh Nhật</div><div class="t" style="left:373.01px;top:331px;font-family:'Liberation Serif', serif;font-weight:400;font-size:21.9px;line-height:21.9px;color:#000000;z-index:5;transform:scaleX(0.9953);">10/8/2022</div><div class="t" style="left:495.00px;top:331px;font-family:'Liberation Serif', serif;font-weight:400;font-size:21.9px;line-height:21.9px;color:#000000;z-index:5;">10/30/2022</div><div class="t" style="left:98.80px;top:359px;font-family:'Liberation Serif', serif;font-weight:400;font-size:21.9px;line-height:21.9px;color:#000000;z-index:5;">2</div><div class="t" style="left:116.20px;top:359px;font-family:'Liberation Serif', serif;font-weight:400;font-size:21.9px;line-height:21.9px;color:#000000;z-index:5;">Nguyễn Thị Thu</div><div class="t" style="left:373.01px;top:359px;font-family:'Liberation Serif', serif;font-weight:400;font-size:21.9px;line-height:21.9px;color:#000000;z-index:5;transform:scaleX(0.9953);">1/10/2022</div><div class="t" style="left:505.29px;top:359px;font-family:'Liberation Serif', serif;font-weight:400;font-size:21.9px;line-height:21.9px;color:#000000;z-index:5;transform:scaleX(1.0057);">2/10/2022</div><div class="t" style="left:98.80px;top:386px;font-family:'Liberation Serif', serif;font-weight:400;font-size:21.9px;line-height:21.9px;color:#000000;z-index:5;">3</div><div class="t" style="left:117.20px;top:386px;font-family:'Liberation Serif', serif;font-weight:400;font-size:21.9px;line-height:21.9px;color:#000000;z-index:5;transform:scaleX(0.9800);">Đặng Kim Ly</div><div class="t" style="left:372.99px;top:386px;font-family:'Liberation Serif', serif;font-weight:400;font-size:21.9px;line-height:21.9px;color:#000000;z-index:5;transform:scaleX(1.0071);">1/11/2022</div><div class="t" style="left:505.28px;top:386px;font-family:'Liberation Serif', serif;font-weight:400;font-size:21.9px;line-height:21.9px;color:#000000;z-index:5;transform:scaleX(1.0174);">3/11/2022</div><div class="t" style="left:97.80px;top:414px;font-family:'Liberation Serif', serif;font-weight:400;font-size:21.9px;line-height:21.9px;color:#000000;z-index:5;">4</div><div class="t" style="left:116.21px;top:414px;font-family:'Liberation Serif', serif;font-weight:400;font-size:21.9px;line-height:21.9px;color:#000000;z-index:5;transform:scaleX(0.9855);">Nguyễn Thị Quỳnh Như</div><div class="t" style="left:372.70px;top:414px;font-family:'Liberation Serif', serif;font-weight:400;font-size:21.9px;line-height:21.9px;color:#000000;z-index:5;">2/10/2022</div><div class="t" style="left:506.30px;top:414px;font-family:'Liberation Serif', serif;font-weight:400;font-size:21.9px;line-height:21.9px;color:#000000;z-index:5;transform:scaleX(1.0057);">4/11/2022</div><div class="t" style="left:690.50px;top:331px;font-family:'Liberation Serif', serif;font-weight:400;font-size:21.9px;line-height:21.9px;color:#000000;z-index:5;transform:scaleX(0.9966);">4/29/1900</div><div class="t" style="left:917.56px;top:96px;font-family:'Liberation Sans', sans-serif;font-weight:700;font-size:14.22px;line-height:14.22px;color:#262626;z-index:20;transform:scaleX(1.0431);">General</div><div class="t" style="left:917.55px;top:118px;font-family:'Liberation Sans', sans-serif;font-weight:400;font-size:14.64px;line-height:14.64px;color:#262626;z-index:20;transform:scaleX(1.0543);">No specific format</div><div class="t" style="left:917.53px;top:150px;font-family:'Liberation Sans', sans-serif;font-weight:700;font-size:14.22px;line-height:14.22px;color:#444444;z-index:20;transform:scaleX(1.0736);">Number</div><div class="t" style="left:917.63px;top:172px;font-family:'Liberation Sans', sans-serif;font-weight:400;font-size:14.64px;line-height:14.64px;color:#595959;z-index:20;transform:scaleX(0.9674);">120.00</div><div class="t" style="left:917.60px;top:204px;font-family:'Liberation Sans', sans-serif;font-weight:700;font-size:14.22px;line-height:14.22px;color:#444444;z-index:20;">Currency</div><div class="t" style="left:918.60px;top:226px;font-family:'Liberation Sans', sans-serif;font-weight:400;font-size:14.64px;line-height:14.64px;color:#595959;z-index:20;transform:scaleX(0.9415);">$120.00</div><div class="t" style="left:918.60px;top:258px;font-family:'Liberation Sans', sans-serif;font-weight:700;font-size:14.22px;line-height:14.22px;color:#444444;z-index:20;transform:scaleX(1.0247);">Accounting</div><div class="t" style="left:922.80px;top:280px;font-family:'Liberation Sans', sans-serif;font-weight:400;font-size:14.64px;line-height:14.64px;color:#595959;z-index:20;transform:scaleX(0.9377);">$120.00</div><div class="t" style="left:917.56px;top:312px;font-family:'Liberation Sans', sans-serif;font-weight:700;font-size:14.22px;line-height:14.22px;color:#444444;z-index:20;transform:scaleX(1.0423);">Short Date</div><div class="t" style="left:918.60px;top:334px;font-family:'Liberation Sans', sans-serif;font-weight:400;font-size:14.64px;line-height:14.64px;color:#595959;z-index:20;transform:scaleX(1.0308);">4/29/1900</div><div class="t" style="left:917.55px;top:366px;font-family:'Liberation Sans', sans-serif;font-weight:700;font-size:14.22px;line-height:14.22px;color:#444444;z-index:20;transform:scaleX(1.0500);">Long Date</div><div class="t" style="left:917.60px;top:388px;font-family:'Liberation Sans', sans-serif;font-weight:400;font-size:14.64px;line-height:14.64px;color:#595959;z-index:20;">Sunday, April 29, 1900</div><div class="t" style="left:918.60px;top:420px;font-family:'Liberation Sans', sans-serif;font-weight:700;font-size:14.22px;line-height:14.22px;color:#444444;z-index:20;transform:scaleX(1.0394);">Time</div><div class="t" style="left:917.61px;top:442px;font-family:'Liberation Sans', sans-serif;font-weight:400;font-size:14.64px;line-height:14.64px;color:#595959;z-index:20;transform:scaleX(0.9950);">12:00:00 AM</div><div class="t" style="left:917.58px;top:474px;font-family:'Liberation Sans', sans-serif;font-weight:700;font-size:14.22px;line-height:14.22px;color:#444444;z-index:20;transform:scaleX(1.0227);">Percentage</div><div class="t" style="left:917.65px;top:496px;font-family:'Liberation Sans', sans-serif;font-weight:400;font-size:14.64px;line-height:14.64px;color:#595959;z-index:20;transform:scaleX(0.9521);">12000.00%</div><div class="t" style="left:917.59px;top:528px;font-family:'Liberation Sans', sans-serif;font-weight:700;font-size:14.22px;line-height:14.22px;color:#444444;z-index:20;transform:scaleX(1.0145);">Fraction</div><div class="t" style="left:917.60px;top:550px;font-family:'Liberation Sans', sans-serif;font-weight:400;font-size:14.64px;line-height:14.64px;color:#595959;z-index:20;transform:scaleX(0.9957);">120</div><div class="t" style="left:917.60px;top:582px;font-family:'Liberation Sans', sans-serif;font-weight:700;font-size:14.22px;line-height:14.22px;color:#444444;z-index:20;">Scientific</div><div class="t" style="left:917.64px;top:604px;font-family:'Liberation Sans', sans-serif;font-weight:400;font-size:14.64px;line-height:14.64px;color:#595959;z-index:20;transform:scaleX(0.9645);">1.20E+02</div><div class="t" style="left:918.60px;top:636px;font-family:'Liberation Sans', sans-serif;font-weight:700;font-size:14.22px;line-height:14.22px;color:#444444;z-index:20;transform:scaleX(1.0643);">Text</div><div class="t" style="left:917.59px;top:658px;font-family:'Liberation Sans', sans-serif;font-weight:400;font-size:14.64px;line-height:14.64px;color:#595959;z-index:20;transform:scaleX(1.0087);">120</div><div class="t" style="left:892.02px;top:690px;font-family:'Liberation Sans', sans-serif;font-weight:400;font-size:15.05px;line-height:15.05px;color:#595959;z-index:20;transform:scaleX(0.9802);">More Number Formats...</div><div class="t" style="left:869.70px;top:115px;font-family:'Liberation Sans', sans-serif;font-weight:400;font-size:19.06px;line-height:19.06px;color:#555555;z-index:20;-webkit-text-stroke:0.5px #555555;text-shadow:1px 0 #c6c6c6,-1px 0 #c6c6c6,0 -1px #c6c6c6,1px -1px #c6c6c6,-1px -1px #c6c6c6;transform:scaleX(0.9032);">123</div><div class="t" style="left:861.30px;top:151px;font-family:'Liberation Sans', sans-serif;font-weight:400;font-size:33.28px;line-height:33.28px;color:#5a5a5a;z-index:20;-webkit-text-stroke:0.6px #5a5a5a;">12</div><div class="t" style="left:862.35px;top:644px;font-family:'Liberation Sans', sans-serif;font-weight:700;font-size:17.67px;line-height:17.67px;color:#595959;z-index:20;transform:scaleX(0.9486);">ABC</div><div class="t" style="left:865.02px;top:591px;font-family:'Liberation Sans', sans-serif;font-weight:400;font-size:22.09px;line-height:22.09px;color:#5e5e5e;z-index:20;-webkit-text-stroke:0.3px #5e5e5e;transform:scaleX(0.9783);">10</div><div class="t" style="left:888.90px;top:585px;font-family:'Liberation Sans', sans-serif;font-weight:400;font-size:12.01px;line-height:12.01px;color:#5e5e5e;z-index:20;-webkit-text-stroke:0.2px #5e5e5e;transform:scaleX(1.1500);">2</div>
</body></html>
